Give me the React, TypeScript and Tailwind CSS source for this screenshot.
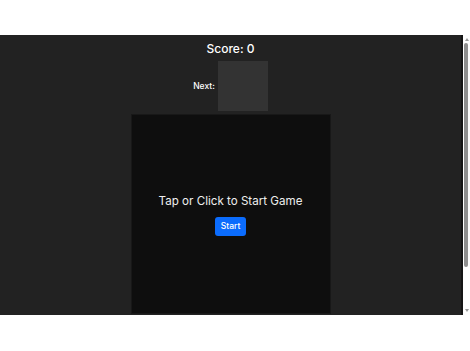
import React from "react";

export default function App() {
  return (
    <div className="h-[351px] w-[470px] bg-white pt-[35px]" style={{ fontFamily: "Inter, 'Noto Sans', sans-serif" }}>
      <div className="flex h-[280px]">
        <div className="flex-1 overflow-hidden bg-[#222222]">
          <div className="flex flex-col items-center pt-[6px]">
            <div className="text-[12px] leading-[16px] font-medium text-white">Score: 0</div>
            <div className="mt-[4px] flex items-center gap-[3px]">
              <span className="text-[8.5px] font-medium text-white">Next:</span>
              <div className="h-[50px] w-[50px] bg-[#333333]" />
            </div>
            <div className="mt-[3px] flex h-[200px] w-[200px] flex-col items-center justify-center border border-[#181818] bg-[#0e0e0e]">
              <div className="text-[11.6px] leading-[16px] text-[#eeeeee]">Tap or Click to Start Game</div>
              <button className="mt-[8px] h-[19px] rounded-[3px] bg-[#0b6cfd] px-[6px] text-[8.5px] font-medium leading-[19px] text-white">
                Start
              </button>
            </div>
          </div>
        </div>
        <div className="relative w-[9px] border-l-2 border-[#141414] bg-[#fdfdfd]">
          <svg className="absolute left-[2px] top-[3px]" width="4" height="3" viewBox="0 0 4 3">
            <path d="M2 0 L4 3 L0 3 Z" fill="#9a9a9a" />
          </svg>
          <div className="absolute left-[1px] top-[8px] h-[224px] w-[4px] rounded-[2px] bg-[#8e8e8e]" />
          <svg className="absolute bottom-[3px] left-[2px]" width="4" height="3" viewBox="0 0 4 3">
            <path d="M0 0 L4 0 L2 3 Z" fill="#9a9a9a" />
          </svg>
        </div>
      </div>
    </div>
  );
}
